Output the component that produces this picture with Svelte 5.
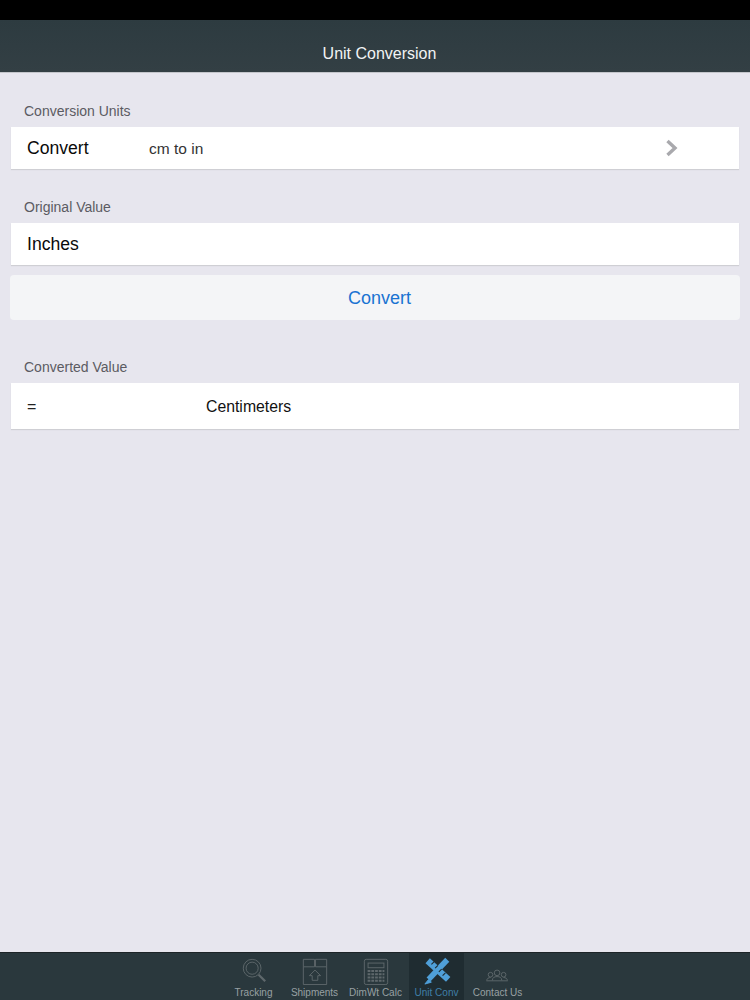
<script>
  const tabs = [
    { key: 'track', label: 'Tracking' },
    { key: 'ship', label: 'Shipments' },
    { key: 'calc', label: 'DimWt Calc' },
    { key: 'conv', label: 'Unit Conv', active: true },
    { key: 'contact', label: 'Contact Us' }
  ];
</script>

<div class="page">
  <div class="status"></div>
  <header class="nav">Unit Conversion</header>

  <main class="content">
    <div class="label first">Conversion Units</div>
    <div class="row r42">
      <span class="name">Convert</span>
      <span class="val">cm to in</span>
      <svg class="chev" width="14" height="18" viewBox="0 0 14 18"><path d="M2.5 2 L10 9 L2.5 16" fill="none" stroke="#a9a9ad" stroke-width="3.4"/></svg>
    </div>

    <div class="label second">Original Value</div>
    <div class="row r42"><span class="name">Inches</span></div>

    <div class="btn">Convert</div>

    <div class="label third">Converted Value</div>
    <div class="row r46">
      <span class="eq">=</span>
      <span class="unit">Centimeters</span>
    </div>
  </main>

  <footer class="tabbar">
    {#each tabs as t}
      <div class="tab" class:active={t.active}>
        <svg width="34" height="30" viewBox="0 0 34 30" fill="none" stroke="#5f686c" stroke-width="1">
          {#if t.key === 'track'}
            <circle cx="15" cy="12" r="9.5"/><circle cx="15" cy="12" r="6.5"/>
            <path d="M22 19 L29 26" stroke-width="2.4"/>
          {:else if t.key === 'ship'}
            <path d="M4.5 2.5 H16.5 V10.5 H4.5 Z M17.5 2.5 H29.5 V10.5 H17.5 Z M4.5 10.500 V29.5 H29.5 V10.5"/>
            <path d="M17 14 L23 20 H20 V25 H14 V20 H11 Z"/>
          {:else if t.key === 'calc'}
            <rect x="4.5" y="2.5" width="25" height="27" rx="2"/>
            <rect x="8.5" y="6.5" width="17" height="5"/>
            <path d="M8 15 H26 M8 18.500 H26 M8 22 H26 M8 25.500 H26" stroke-width="2" stroke-dasharray="3 1"/>
          {:else if t.key === 'conv'}
            <path d="M7 4 L29 24" stroke="#4f9fd8" stroke-width="7"/>
            <path d="M28 3 L8 24" stroke="#4f9fd8" stroke-width="6"/>
            <path d="M8 24 L4 29 L11 27 Z" fill="#4f9fd8" stroke="#4f9fd8"/>
            <path d="M11 8 L14 5 M15 12 L18 9 M19 16 L22 13 M23 20 L26 17" stroke="#1f2c31" stroke-width="1.2"/>
          {:else}
            <circle cx="16" cy="17" r="3"/><circle cx="9" cy="19" r="2.500"/><circle cx="23" cy="19" r="2.500"/>
            <path d="M5 25 C5 23 7 22 9 22 M11 25 C11 22 13 21 16 21 C19 21 21 22 21 25 M23 22 C25 22 27 23 27 25 M4.500 25.500 H27.500"/>
          {/if}
        </svg>
        <span>{t.label}</span>
      </div>
    {/each}
  </footer>
</div>

<style>
  :global(body) { margin: 0; }
  .page {
    width: 750px; height: 1000px; display: flex; flex-direction: column;
    font-family: "Liberation Sans", Arial, sans-serif; background: #e7e6ee; overflow: hidden;
  }
  .status { height: 20px; background: #000; flex: none; }
  .nav {
    height: 53px; flex: none; box-sizing: border-box; padding: 15px 0 0 9px;
    display: flex; align-items: center; justify-content: center;
    background: linear-gradient(#2d3b40, #333f44); color: #f1f3f4; font-size: 16px;
    border-bottom: 1px solid #c4c6cb;
  }
  .content { flex: 1; padding: 0 11px; }
  .label { color: #5b5b62; font-size: 14px; line-height: 16px; padding-left: 13px; }
  .first { margin-top: 30px; margin-bottom: 8px; }
  .second { margin-top: 30px; margin-bottom: 8px; }
  .third { margin-top: 39px; margin-bottom: 8px; }
  .row {
    background: #fff; display: flex; align-items: center; position: relative;
    box-sizing: border-box; box-shadow: 0 1px 1px #cfcfd4;
  }
  .r42 { height: 42px; }
  .r46 { height: 46px; padding-top: 1px; }
  .name { font-size: 17.6px; color: #0a0a0a; margin-left: 16px; width: 122px; }
  .val { font-size: 15.500px; color: #333; padding-top: 1px; }
  .chev { position: absolute; left: 654px; top: 12px; }
  .btn {
    margin: 10px -1px 0; height: 45px; background: #f4f5f7; border-radius: 4px;
    display: flex; align-items: center; justify-content: center;
    color: #1a73d2; font-size: 18px; padding: 2px 0 0 9px; box-sizing: border-box;
  }
  .eq { font-size: 16px; margin-left: 16px; width: 179px; color: #222; }
  .unit { font-size: 15.800px; color: #111; }
  .tabbar {
    height: 48px; flex: none; background: #2a383d; display: flex; justify-content: flex-start;
    padding-left: 223px; border-top: 1px solid #1d2427; box-sizing: border-box;
  }
  .tab {
    width: 61px; display: flex; flex-direction: column; align-items: center;
    font-size: 10px; color: #98a0a3; white-space: nowrap; padding-top: 4px; box-sizing: border-box;
  }
  .tab svg { height: 28px; flex: none; margin-bottom: 2px; }
  .tab.active { background: #1f2c31; color: #3f7fa8; width: 55px; margin: 0 3px; }
</style>
